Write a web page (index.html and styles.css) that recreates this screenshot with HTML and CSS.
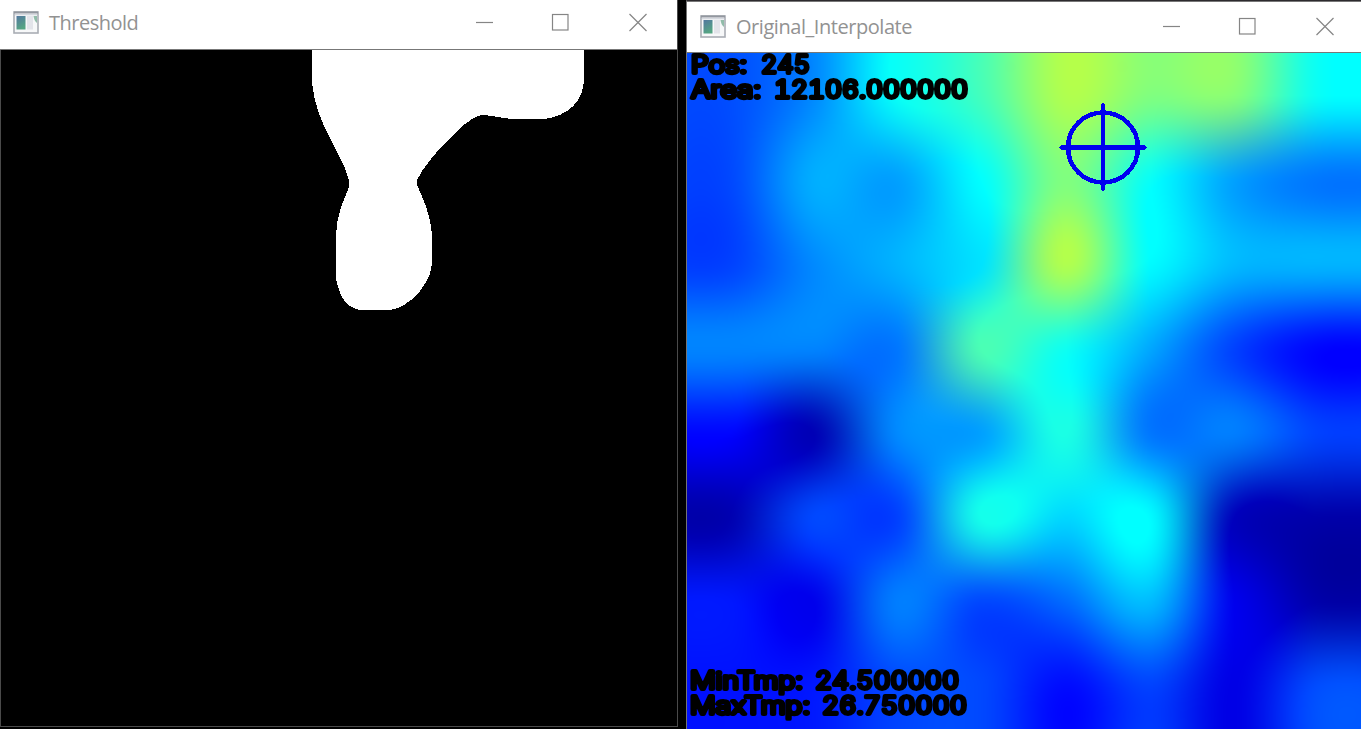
FILE: index.html
```html
<!DOCTYPE html>
<html lang="en">
<head>
<meta charset="utf-8">
<title>Thermal view</title>
<link rel="stylesheet" href="styles.css">
</head>
<body>
<svg class="defs" width="0" height="0">
  <defs>
    <linearGradient id="pane" x1="0" y1="0" x2="0.4" y2="1">
      <stop offset="0" stop-color="#5277a0"/>
      <stop offset="1" stop-color="#55a583"/>
    </linearGradient>
    <symbol id="app-icon" viewBox="0 0 26 23">
      <rect x="1" y="1" width="24" height="21" fill="#f7f8f9" stroke="#a9adb4" stroke-width="1.6"/>
      <path d="M1 1.5H25" stroke="#92979f" stroke-width="2"/>
      <path d="M2 3.6H24" stroke="#d4d8de" stroke-width="1.4"/>
      <rect x="3.500" y="5" width="9" height="13.500" fill="url(#pane)"/>
      <rect x="14" y="5" width="6" height="13.500" fill="#e3e4ea"/>
      <path d="M20.5 5H24V12C22 10.500 21 8.500 20.500 5Z" fill="#91bca9"/>
    </symbol>
    <symbol id="controls" viewBox="0 0 172 20">
      <g fill="none" stroke="#858585" stroke-width="1.2">
        <path d="M0 10.500H17"/>
        <rect x="76.500" y="2.500" width="15.500" height="15.500"/>
        <path d="M153.500 2L170.500 19M170.500 2L153.500 19"/>
      </g>
    </symbol>
  </defs>
</svg>
<main class="desktop">
  <section class="window window-threshold">
    <header class="titlebar">
      <svg class="icon"><use href="#app-icon"/></svg>
      <h1 class="title">Threshold</h1>
      <svg class="controls"><use href="#controls"/></svg>
    </header>
    <div class="view">
      <svg class="mask" viewBox="0 0 676 676" shape-rendering="crispEdges">
        <path fill="#fff" d="M311 0V33C313 54 320 70 327 84C334 99 345 117 348 130V137C343 150 335 165 335 186V225C335 232 338 241 341 247Q346 255 351 257Q355 260 361 260H388Q399 259 407 252Q417 246 423 235Q430 226 431 212V185C430 166 422 148 416 135V130C421 119 434 103 447 90C458 79 470 67 480 65C488 65 496 67 510 69H543C567 66 583 51 583 29V0Z"/>
      </svg>
    </div>
  </section>
  <section class="window window-original">
    <header class="titlebar">
      <svg class="icon"><use href="#app-icon"/></svg>
      <h1 class="title">Original_Interpolate</h1>
      <svg class="controls"><use href="#controls"/></svg>
    </header>
    <div class="view">
      <canvas class="heatmap" id="heatmap" width="674" height="676"></canvas>
      <svg class="overlay" viewBox="687 53 674 676">
        <g class="target" shape-rendering="crispEdges">
          <circle cx="1103" cy="147.500" r="35"/>
          <path d="M1061.500 147.500H1144.500M1103 105.500V188.500"/>
        </g>
        <g class="readout">
          <text x="691" y="72.700" textLength="56" lengthAdjust="spacingAndGlyphs">Pos:</text>
          <text x="761" y="72.700" textLength="49" lengthAdjust="spacingAndGlyphs">245</text>
          <text x="691" y="97.700" textLength="70" lengthAdjust="spacingAndGlyphs">Area:</text>
          <text x="774" y="97.700" textLength="194" lengthAdjust="spacingAndGlyphs">12106.000000</text>
          <text x="690" y="688.700" textLength="113" lengthAdjust="spacingAndGlyphs">MinTmp:</text>
          <text x="815" y="688.700" textLength="144" lengthAdjust="spacingAndGlyphs">24.500000</text>
          <text x="690" y="713.700" textLength="120" lengthAdjust="spacingAndGlyphs">MaxTmp:</text>
          <text x="822" y="713.700" textLength="145" lengthAdjust="spacingAndGlyphs">26.750000</text>
        </g>
      </svg>
    </div>
  </section>
</main>
<script src="heatmap.js"></script>
</body>
</html>
```
FILE: styles.css
```css
* { box-sizing: border-box; }
body { margin: 0; background: #000; overflow: hidden; font-family: "Open Sans", "Noto Sans", sans-serif; }
.defs { position: absolute; }
.desktop { display: flex; gap: 8px; width: 1361px; height: 729px; }
.window { display: flex; flex-direction: column; }
.window-threshold { width: 678px; height: 727px; border: 1px solid #4a4a4a; border-top: 0; }
.window-original { width: 675px; height: 729px; border-left: 1px solid #747474; border-top: 1px solid #2c2a2e; }
.titlebar { display: flex; align-items: center; flex: none; background: #fff; border-bottom: 1px solid #777; }
.window-threshold .titlebar { height: 50px; margin-left: -1px; padding: 0 29px 5px 13px; }
.window-original .titlebar { height: 52px; border-top: 1px solid #777; padding: 0 26px 2px 13px; }
.icon { width: 26px; height: 23px; flex: none; }
.title { margin: 0 auto 0 10px; color: #929292; font-size: 20px; font-weight: 400; line-height: 28px; white-space: nowrap; }
.window-threshold .title { letter-spacing: -0.5px; padding-top: 2px; }
.window-original .title { letter-spacing: -0.45px; padding-top: 1px; }
.controls { width: 172px; height: 20px; flex: none; }
.view { position: relative; flex: 1; min-height: 0; background: #000; }
.mask, .heatmap { display: block; width: 100%; height: 676px; }
.overlay { position: absolute; inset: 0; width: 674px; height: 676px; }
.target { fill: none; stroke: #0000f0; stroke-width: 4.500; stroke-linecap: round; }
.readout { font-family: Inter, "Liberation Sans", sans-serif; font-size: 23.500px; font-weight: 300; font-variant-numeric: tabular-nums; fill: #000; stroke: #000; stroke-width: 3.800; stroke-linejoin: round; }
```
FILE: heatmap.js
```js
// 8x8 sensor grid, in quarter-degree steps above the minimum temperature.
const grid = [
  [2.9, 3.9, 6, 7, 8.8, 8, 8.1, 6],
  [2.8, 4.5, 4.3, 5.9, 8, 6, 4.3, 3.6],
  [2.7, 3.9, 4.6, 5.4, 8.8, 5.8, 4.7, 4.6],
  [3.8, 3.8, 3.6, 7.1, 6.1, 4.4, 2.7, 1.7],
  [1.7, 0.4, 3.9, 4.3, 6.3, 3.6, 3.7, 2.7],
  [0.3, 2.8, 2.7, 6.2, 5.2, 5.8, 0.5, 0.2],
  [2, 1.3, 3.7, 2.8, 3.4, 4.7, 1.3, 0.2],
  [1.9, 2, 2.8, 2.8, 1.8, 2.7, 1.2, 2.9]
];

const A = -0.5;
function weight(t) {
  t = Math.abs(t);
  if (t <= 1) return (A + 2) * t * t * t - (A + 3) * t * t + 1;
  if (t < 2) return A * (t * t * t - 5 * t * t + 8 * t - 4);
  return 0;
}

function taps(size) {
  return Array.from({ length: size }, (_, p) => {
    const s = (p + 0.5) * 8 / size - 0.5;
    const base = Math.floor(s);
    return [-1, 0, 1, 2].map(k => [
      Math.min(7, Math.max(0, base + k)),
      weight(s - base - k)
    ]);
  });
}

function channel(v, centre) {
  return 255 * Math.min(1, Math.max(0, 1.5 - Math.abs(4 * v - centre)));
}

// The colour map is applied per sensor cell, then the colours are resampled.
const colours = grid.map(row => row.map(level => {
  const v = 0.03 + level * 15 / 255;
  return [channel(v, 3), channel(v, 2), channel(v, 1)];
}));

const canvas = document.getElementById('heatmap');
const ctx = canvas.getContext('2d');
const image = ctx.createImageData(canvas.width, canvas.height);
const xs = taps(canvas.width);
const ys = taps(canvas.height);
let offset = 0;
for (const ty of ys) {
  for (const tx of xs) {
    for (let ch = 0; ch < 3; ch++) {
      let sum = 0;
      for (const [r, wy] of ty) {
        for (const [c, wx] of tx) sum += colours[r][c][ch] * wy * wx;
      }
      image.data[offset++] = sum;
    }
    image.data[offset++] = 255;
  }
}
ctx.putImageData(image, 0, 0);
```
